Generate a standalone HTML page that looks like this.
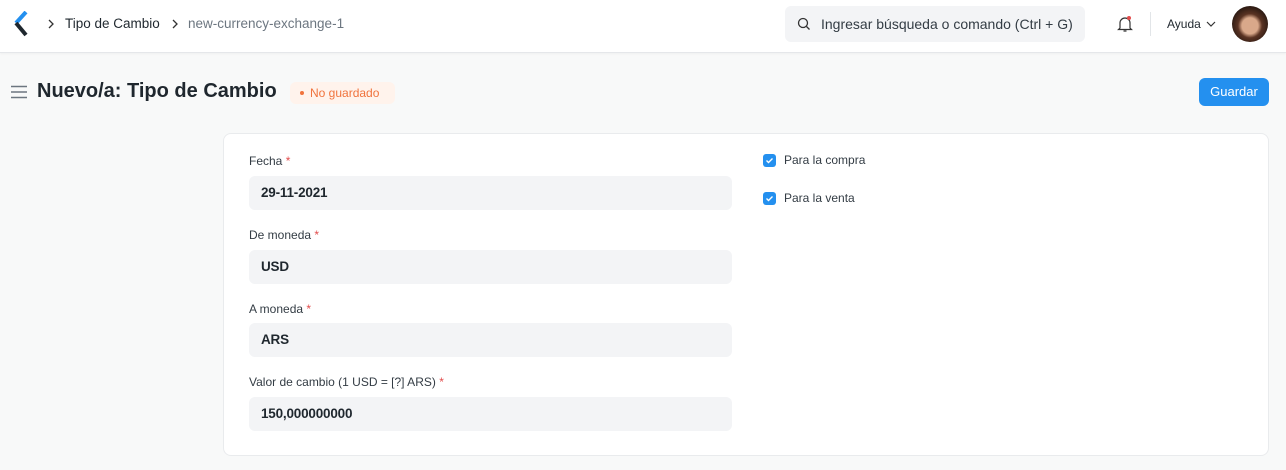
<!DOCTYPE html>
<html><head><meta charset="utf-8"><style>
*{box-sizing:border-box;margin:0;padding:0}
body{width:1286px;height:470px;background:#f8f9f9;font-family:"Liberation Sans",sans-serif;color:#1f272e;overflow:hidden;position:relative}
.nav{position:absolute;left:0;top:0;width:1286px;height:53px;background:#fff;border-bottom:1px solid #e5e7ea;box-shadow:0 1px 2px rgba(0,0,0,.04)}
.abs{position:absolute}
.bc{font-size:13.5px;top:16px}
.search{left:785px;top:6px;width:300px;height:36px;background:#f3f4f6;border-radius:6px}
.search span{position:absolute;left:36px;top:10px;font-size:14px;color:#333c44}
.title{left:37px;top:80px;font-size:20px;font-weight:bold;color:#1f272e}
.badge{left:290px;top:82px;height:22px;width:105px;background:#fff3ec;border-radius:6px;color:#f0733d;font-size:12px;padding:4px 0 0 20px}
.badge:before{content:"";position:absolute;left:10px;top:9px;width:4px;height:4px;border-radius:2px;background:#f0733d}
.btn{left:1199px;top:78px;width:70px;height:28px;background:#2490ef;border-radius:6px;color:#fff;font-size:13px;text-align:center;line-height:28px}
.card{left:223px;top:133px;width:1046px;height:323px;background:#fff;border:1px solid #e9ebed;border-radius:8px}
.lbl{font-size:12px;color:#333c44;left:249px}
.lbl i{color:#e24c4c;font-style:normal}
.inp{left:249px;width:483px;height:34px;background:#f3f4f6;border-radius:6px;font-size:13.5px;font-weight:bold;padding:9px 0 0 12px;color:#1f272e;letter-spacing:-0.2px}
.cb{left:763px;width:13px;height:13px;border-radius:3px;background:#2490ef}
.cbl{left:784px;font-size:12px;color:#333c44}
</style></head><body>
<div class="nav">
<svg class="abs" style="left:14px;top:11px" width="16" height="26" viewBox="0 0 16 26"><path d="M12 1L2 12" stroke="#2490ef" stroke-width="4"/><path d="M2 12L12 24" stroke="#1f272e" stroke-width="4"/></svg>
<svg class="abs" style="left:47px;top:19px" width="8" height="10"><path d="M2 1l4 4-4 4" stroke="#333" fill="none" stroke-width="1.3"/></svg>
<div class="abs bc" style="left:65px;color:#1f272e">Tipo de Cambio</div>
<svg class="abs" style="left:171px;top:19px" width="8" height="10"><path d="M2 1l4 4-4 4" stroke="#333" fill="none" stroke-width="1.3"/></svg>
<div class="abs bc" style="left:188px;color:#6c7680;font-size:13.5px">new-currency-exchange-1</div>
<div class="abs search"><svg class="abs" style="left:12px;top:11px" width="14" height="14"><circle cx="6" cy="6" r="4.5" stroke="#333" fill="none" stroke-width="1.3"/><path d="M9.5 9.5l3 3" stroke="#333" stroke-width="1.3"/></svg><span>Ingresar búsqueda o comando (Ctrl + G)</span></div>
<svg class="abs" style="left:1116px;top:14px" width="18" height="20"><path d="M4 14V9a5 5 0 0 1 10 0v5l1.5 1.5h-13z M7.5 17h3" stroke="#333" fill="none" stroke-width="1.2"/><circle cx="13" cy="4" r="2" fill="#e24c4c"/></svg>
<div class="abs" style="left:1150px;top:12px;width:1px;height:24px;background:#e2e5e8"></div>
<div class="abs" style="left:1167px;top:17px;font-size:12px">Ayuda</div>
<svg class="abs" style="left:1206px;top:20px" width="10" height="8"><path d="M1 2l4 4 4-4" stroke="#333" fill="none" stroke-width="1.2"/></svg>
<div class="abs" style="left:1232px;top:6px;width:36px;height:36px;border-radius:50%;background:radial-gradient(circle at 50% 55%,#d9a88a 0 30%,#5a3323 45%,#2f1c14 70%)"></div>
</div>
<svg class="abs" style="left:11px;top:85px" width="16" height="14"><path d="M0 1.5h16M0 7h16M0 12.5h16" stroke="#6c7680" stroke-width="1.5"/></svg>
<div class="abs title">Nuevo/a: Tipo de Cambio</div>
<div class="abs badge">No guardado</div>
<div class="abs btn">Guardar</div>
<div class="abs card"></div>
<div class="abs lbl" style="top:154px">Fecha <i>*</i></div>
<div class="abs inp" style="top:176px">29-11-2021</div>
<div class="abs lbl" style="top:228px">De moneda <i>*</i></div>
<div class="abs inp" style="top:250px">USD</div>
<div class="abs lbl" style="top:302px">A moneda <i>*</i></div>
<div class="abs inp" style="top:323px">ARS</div>
<div class="abs lbl" style="top:375px">Valor de cambio (1 USD = [?] ARS) <i>*</i></div>
<div class="abs inp" style="top:397px">150,000000000</div>
<div class="abs cb" style="top:154px"><svg width="13" height="13"><path d="M3.5 6.5l2 2 4-4" stroke="#fff" fill="none" stroke-width="1.4"/></svg></div>
<div class="abs cbl" style="top:153px">Para la compra</div>
<div class="abs cb" style="top:192px"><svg width="13" height="13"><path d="M3.5 6.5l2 2 4-4" stroke="#fff" fill="none" stroke-width="1.4"/></svg></div>
<div class="abs cbl" style="top:191px">Para la venta</div>
</body></html>
